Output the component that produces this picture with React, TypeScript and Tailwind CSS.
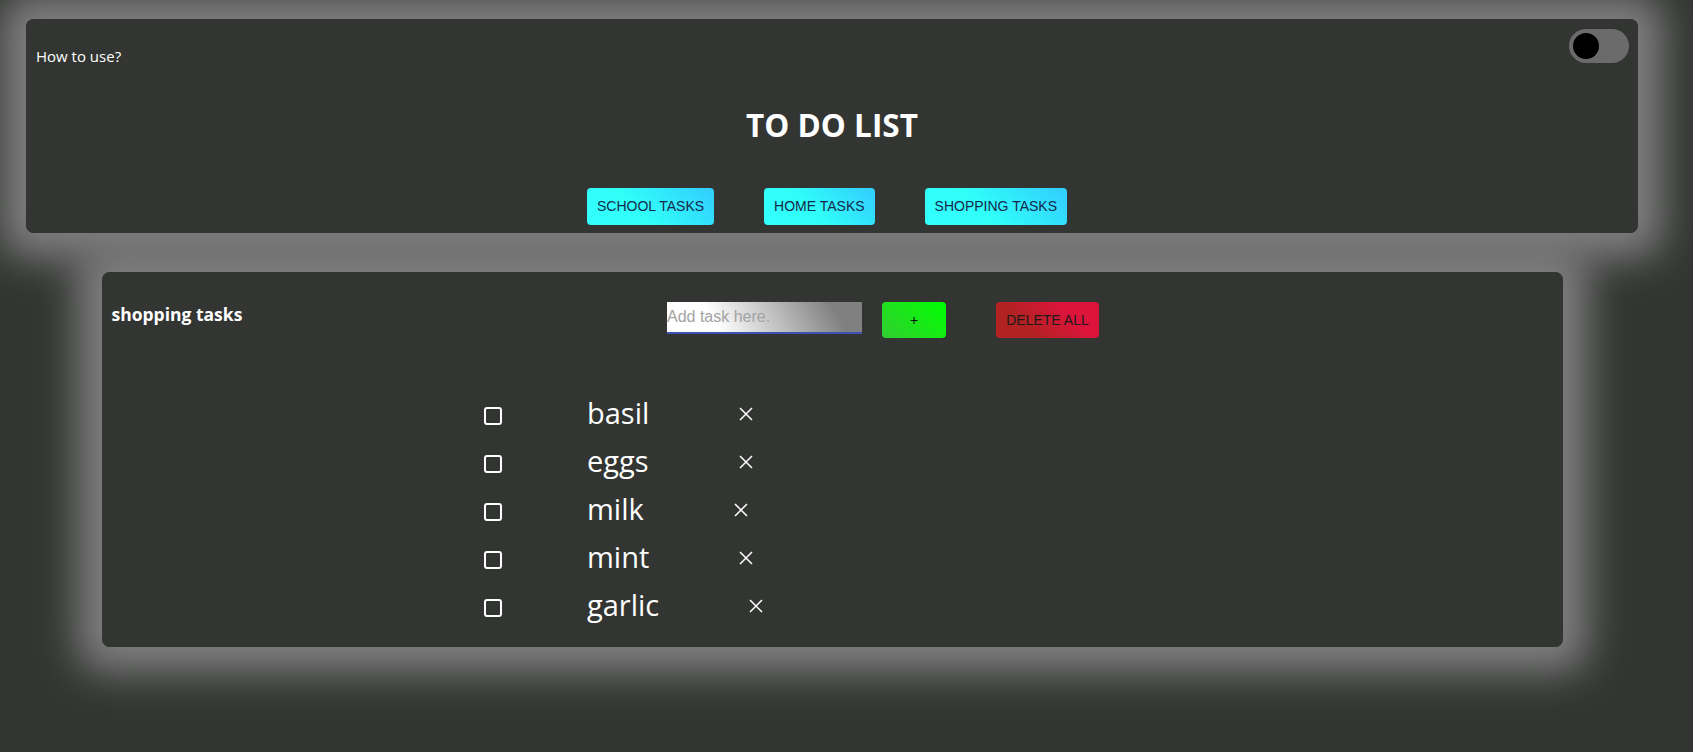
import { useState } from 'react'

const items = ['basil', 'eggs', 'milk', 'mint', 'garlic']

const cardShadow =
  "relative rounded-[8px] bg-[#323532] before:absolute before:inset-0 before:-z-10 before:rounded-[8px] before:shadow-[0_0_40px_25px_gray]"

function Toggle() {
  const [on, setOn] = useState(false)
  return (
    <button
      onClick={() => setOn(!on)}
      className="relative w-[60px] h-[34px] rounded-full bg-[#6b6b6b] shrink-0"
    >
      <span
        className={
          on
            ? 'absolute top-[4px] left-[30px] w-[26px] h-[26px] rounded-full bg-black'
            : 'absolute top-[4px] left-[4px] w-[26px] h-[26px] rounded-full bg-black'
        }
      />
    </button>
  )
}

function NavButton({ label }: { label: string }) {
  return (
    <button className="h-[37px] px-[10px] rounded-[4px] bg-[linear-gradient(45deg,#33ffff_0%,#30fff8_40%,#33ccff_100%)] font-['Liberation_Sans',Arial,sans-serif] text-[14px] text-[#16284a]">
      {label}
    </button>
  )
}

function TaskRow({ name }: { name: string }) {
  return (
    <li className="flex items-center h-[48px]">
      <span className="w-[18px] h-[18px] border-2 border-white rounded-[3px] shrink-0" />
      <span className="ml-[85px] pb-[7px] text-[29px] leading-[48px] text-white">{name}</span>
      <button className="ml-[90px] -mt-[5px] w-[14px] h-[14px]">
        <svg viewBox="0 0 14 14" width="14" height="14" fill="none" stroke="white" strokeWidth="1.5">
          <path d="M1 1 L13 13 M13 1 L1 13" />
        </svg>
      </button>
    </li>
  )
}

export default function App() {
  const [task, setTask] = useState('')

  return (
    <div className="relative isolate min-h-[752px] overflow-hidden bg-[#323532] pt-[19px] font-['Open_Sans',sans-serif] text-white">
      <header className={`${cardShadow} ml-[26px] w-[1612px] h-[214px] flex flex-col`}>
        <div className="flex justify-between items-start pl-[10px] pr-[9px] pt-[10px]">
          <p className="mt-[17.2px] text-[15px] leading-[20px]">How to use?</p>
          <Toggle />
        </div>
        <h1 className="mt-[39px] text-center text-[31.5px] leading-[40px] font-bold">TO DO LIST</h1>
        <div className="mt-[43px] flex justify-center gap-[50px] pr-[10px]">
          <NavButton label="SCHOOL TASKS" />
          <NavButton label="HOME TASKS" />
          <NavButton label="SHOPPING TASKS" />
        </div>
      </header>

      <main className={`${cardShadow} mt-[39px] ml-[101.5px] w-[1461px] pt-[30px] pb-[15px]`}>
        <div className="flex items-start">
          <h2 className="w-[565.5px] pl-[10px] text-[17.5px] leading-[24px] font-bold">shopping tasks</h2>
          <input
            value={task}
            onChange={(e) => setTask(e.target.value)}
            placeholder="Add task here."
            className="w-[195px] h-[32px] border-b-2 border-[#3f51b5] bg-[linear-gradient(60deg,#ffffff_25%,#808080_85%)] font-['Liberation_Sans',Arial,sans-serif] text-[16px] text-black placeholder:text-[#a3a3a3] outline-none"
          />
          <button className="ml-[20px] w-[64px] h-[36px] rounded-[4px] bg-[linear-gradient(45deg,#32cd32,#00ff00)] font-['Liberation_Sans',Arial,sans-serif] text-[14px] text-[#111]">
            +
          </button>
          <button className="ml-[50px] w-[103px] h-[36px] rounded-[4px] bg-[linear-gradient(45deg,#b22222_30%,#dc143c_70%)] font-['Liberation_Sans',Arial,sans-serif] text-[14px] text-[#1a1a1a]">
            DELETE ALL
          </button>
        </div>
        <ul className="mt-[54px] pl-[382.5px]">
          {items.map((it) => (
            <TaskRow key={it} name={it} />
          ))}
        </ul>
      </main>
    </div>
  )
}
